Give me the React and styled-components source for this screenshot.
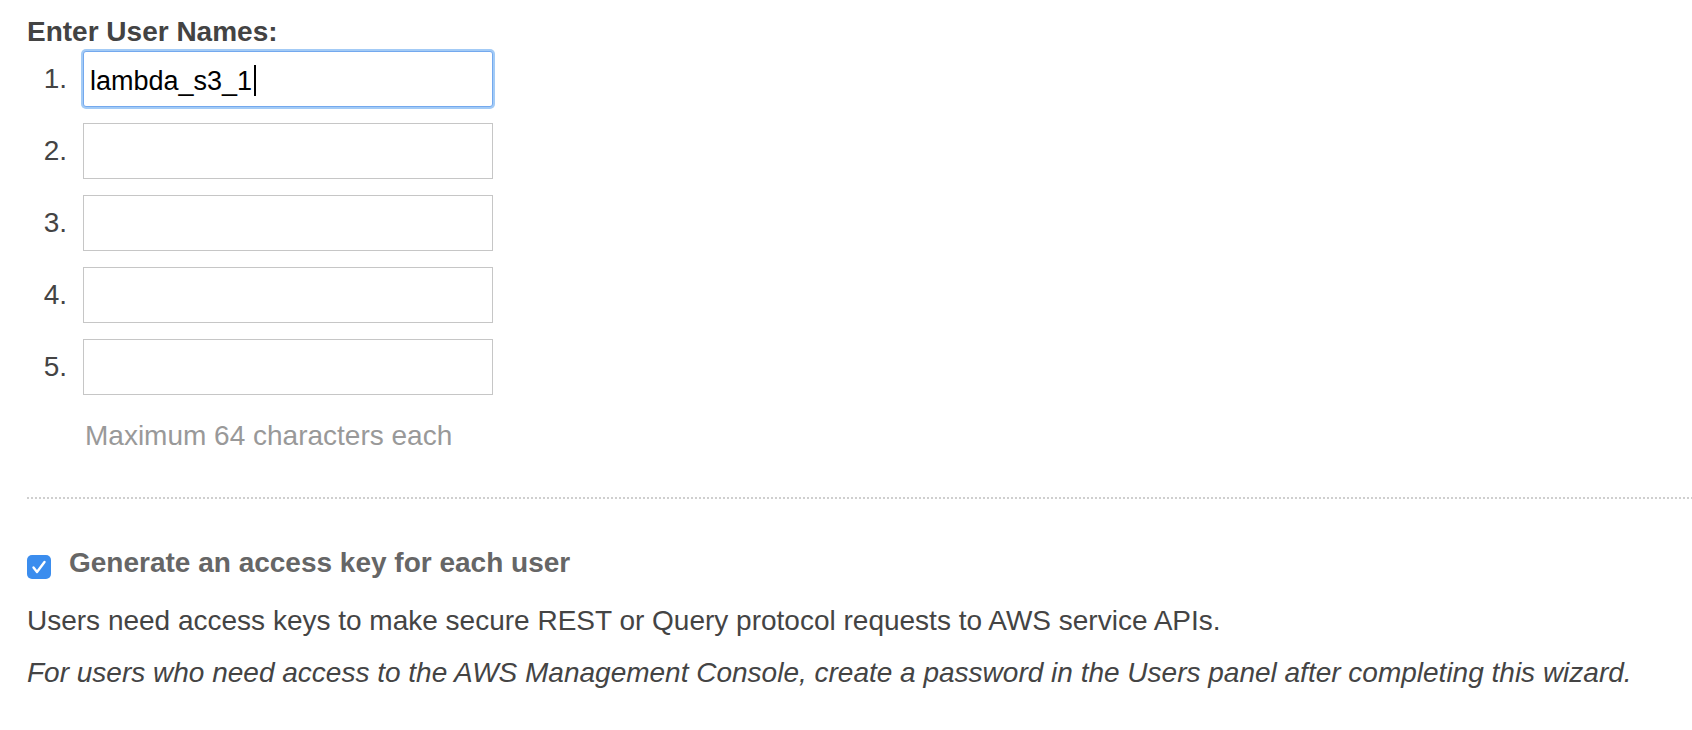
import React from 'react';
import styled, { createGlobalStyle } from 'styled-components';

const GlobalStyle = createGlobalStyle`
  html, body {
    margin: 0;
    padding: 0;
    background: #fff;
  }
  body {
    font-family: 'Liberation Sans', Arial, Helvetica, sans-serif;
    color: #444;
  }
`;

const names = ['lambda_s3_1', '', '', '', ''];

const App = () => {
  return (
    <>
      <GlobalStyle />
      <Page>
        <Heading>Enter User Names:</Heading>
        <NameList>
          {names.map((name, i) => (
            <NameRow key={i}>
              <Index>{i + 1}.</Index>
              <Field $focused={i === 0}>
                {name}
                {i === 0 && <Caret />}
              </Field>
            </NameRow>
          ))}
        </NameList>
        <Hint>Maximum 64 characters each</Hint>
        <Divider />
        <CheckRow>
          <Checkbox>
            <svg width="24" height="24" viewBox="0 0 24 24">
              <polyline
                points="6.5,12.5 10,17 17.5,7"
                fill="none"
                stroke="#fff"
                strokeWidth="2.4"
                strokeLinecap="round"
                strokeLinejoin="round"
              />
            </svg>
          </Checkbox>
          <CheckLabel>Generate an access key for each user</CheckLabel>
        </CheckRow>
        <Note>Users need access keys to make secure REST or Query protocol requests to AWS service APIs.</Note>
        <Note $italic>
          For users who need access to the AWS Management Console, create a password in the Users panel after completing this wizard.
        </Note>
      </Page>
    </>
  );
};

const Page = styled.div`
  padding: 16px 0 40px 27px;
  font-size: 28px;
  line-height: 32px;
`;

const Heading = styled.div`
  font-weight: bold;
  color: #434343;
`;

const NameList = styled.div`
  margin-top: 3px;
  display: flex;
  flex-direction: column;
  gap: 16px;
`;

const NameRow = styled.div`
  display: flex;
  align-items: flex-start;
`;

const Index = styled.div`
  width: 40px;
  margin-right: 16px;
  padding-top: 12px;
  text-align: right;
  color: #444;
`;

const Field = styled.div`
  position: relative;
  box-sizing: border-box;
  width: 410px;
  height: 56px;
  padding: 4px 6px 0;
  display: flex;
  align-items: center;
  font-size: 27px;
  color: #000;
  background: #fff;
  border: 1px solid ${(p) => (p.$focused ? '#74a9ee' : '#c6c6c6')};
  border-radius: ${(p) => (p.$focused ? '3px' : '0')};
  box-shadow: ${(p) => (p.$focused ? '0 0 0 2px #a3cbf6' : 'none')};
`;

const Caret = styled.span`
  display: inline-block;
  width: 2px;
  height: 31px;
  margin-left: 2px;
  margin-top: -2px;
  background: #000;
`;

const Hint = styled.div`
  margin-top: 25px;
  padding-left: 58px;
  color: #999;
`;

const Divider = styled.div`
  margin-top: 45px;
  height: 2px;
  background: repeating-linear-gradient(to right, #cfcfcf 0 2px, transparent 2px 4px);
`;

const CheckRow = styled.div`
  margin-top: 48px;
  display: flex;
  align-items: flex-start;
  gap: 18px;
`;

const Checkbox = styled.span`
  margin-top: 8px;
  width: 24px;
  height: 24px;
  border-radius: 5px;
  background: #3b8dee;
  display: flex;
  align-items: center;
  justify-content: center;
  flex-shrink: 0;
`;

const CheckLabel = styled.span`
  font-weight: bold;
  color: #666;
`;

const Note = styled.p`
  margin: ${(p) => (p.$italic ? '20px' : '26px')} 0 0;
  color: #444;
  font-style: ${(p) => (p.$italic ? 'italic' : 'normal')};
`;

export default App;
